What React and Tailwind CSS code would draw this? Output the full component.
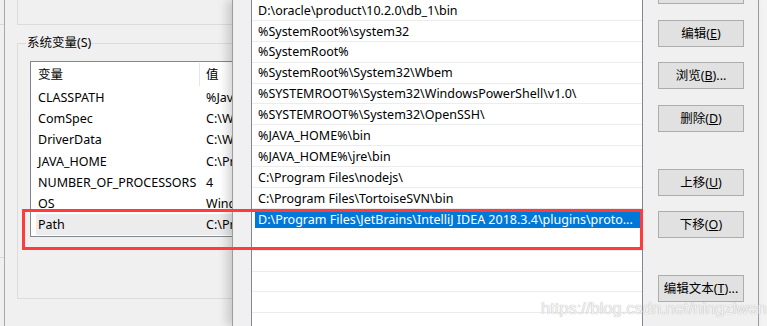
import React from 'react';

const sysVars = [
  ['CLASSPATH', '%Java_Home%\\lib\\dt.jar;%Java_Home%\\lib\\tools.jar'],
  ['ComSpec', 'C:\\WINDOWS\\system32\\cmd.exe'],
  ['DriverData', 'C:\\Windows\\System32\\Drivers\\DriverData'],
  ['JAVA_HOME', 'C:\\Program Files\\Java\\jdk1.8.0_201'],
  ['NUMBER_OF_PROCESSORS', '4'],
  ['OS', 'Windows_NT'],
  ['Path', 'C:\\Program Files (x86)\\Common Files\\Oracle\\Java\\javapath'],
];

const pathItems = [
  'D:\\oracle\\product\\10.2.0\\db_1\\bin',
  '%SystemRoot%\\system32',
  '%SystemRoot%',
  '%SystemRoot%\\System32\\Wbem',
  '%SYSTEMROOT%\\System32\\WindowsPowerShell\\v1.0\\',
  '%SYSTEMROOT%\\System32\\OpenSSH\\',
  '%JAVA_HOME%\\bin',
  '%JAVA_HOME%\\jre\\bin',
  'C:\\Program Files\\nodejs\\',
  'C:\\Program Files\\TortoiseSVN\\bin',
];

const font = 'font-["Noto_Sans","Noto_Sans_CJK_SC",sans-serif]';

const Btn = ({ children, className = '' }) => (
  <div
    className={`h-[27px] w-[86px] shrink-0 border border-[#adadad] bg-[#e1e1e1] flex items-center justify-center pt-[1px] text-[12.5px] text-black ${className}`}
  >
    {children}
  </div>
);

const App = () => {
  return (
    <div className={`relative w-[767px] h-[326px] overflow-hidden bg-[#f0f0f0] flex ${font} text-[12.5px] text-black leading-none`}>
      {/* Background window: environment variables */}
      <div className="w-[232px] h-full shrink-0 flex overflow-hidden">
        <div className="w-[5px] shrink-0 border-r border-[#a8a8a8]">
          <div className="h-[25px] border-b border-[#d9d9d9]" />
          <div className="h-[233px] border-b border-[#d9d9d9]" />
        </div>
        <div className="pl-[12px]">
          <div className="h-[25px] w-[420px] border-l border-b border-[#dcdcdc]" />
          <fieldset className="mt-[9px] w-[420px] h-[265px] border border-[#dcdcdc]">
            <legend className="ml-[8px] px-[1px] h-[18px] leading-[18px]">系统变量(S)</legend>
            <div className="mt-[9px] ml-[12px] w-[320px] h-[176px] border border-[#828790] bg-white">
              <div className="h-[25px] flex items-center">
                <div className="w-[169px] h-[23px] pl-[7px] pt-[1px] flex items-center border-r border-[#e5e5e5]">变量</div>
                <div className="pl-[6px] pt-[1px] whitespace-nowrap">值</div>
              </div>
              {sysVars.map(([name, value]) => (
                <div
                  key={name}
                  className={`ml-[5px] h-[21.1px] pt-[2px] flex items-center whitespace-nowrap ${name === 'Path' ? 'bg-[#ececec]' : ''}`}
                >
                  <span className="w-[164px] shrink-0 pl-[2px]">{name}</span>
                  <span className="pl-[6px]">{value}</span>
                </div>
              ))}
            </div>
          </fieldset>
        </div>
      </div>

      {/* Edit environment variable dialog */}
      <div className="relative w-[527px] h-full shrink-0 flex border-l border-r border-[#9c9c9c] bg-[#f0f0f0] shadow-[-5px_0_9px_rgba(0,0,0,0.16)]">
        <div className="ml-[18px] w-[392px] h-[340px] -mt-[1px] border border-[#828790] bg-white shrink-0">
          {pathItems.map((p) => (
            <div key={p} className="h-[20.9px] border-b border-[#ececec] pl-[6px] pt-[2px] flex items-center whitespace-nowrap">
              {p}
            </div>
          ))}
          <div className="h-[20.9px] pt-[2px] pl-[3px] pr-[1px]">
            <div className="h-[17.5px] bg-[#0078d7] text-white pl-[3px] pt-[1px] flex items-center whitespace-nowrap overflow-hidden">
              D:\Program Files\JetBrains\IntelliJ IDEA 2018.3.4\plugins\proto...
            </div>
          </div>
          {[0, 1, 2, 3, 4].map((i) => (
            <div key={i} className="h-[20.9px] border-b border-[#ececec]" />
          ))}
        </div>
        <div className="ml-[15px] -mt-[23px] flex flex-col">
          <Btn>新建(<u>N</u>)</Btn>
          <Btn className="mt-[16px]">编辑(<u>E</u>)</Btn>
          <Btn className="mt-[15px]">浏览(<u>B</u>)...</Btn>
          <Btn className="mt-[16px]">删除(<u>D</u>)</Btn>
          <Btn className="mt-[37px]">上移(<u>U</u>)</Btn>
          <Btn className="mt-[15px]">下移(<u>O</u>)</Btn>
          <Btn className="mt-[37px]">编辑文本(<u>T</u>)...</Btn>
        </div>
      </div>

      <div className="flex-1 bg-[#f3f3f3]" />

      {/* Annotation */}
      <div className="absolute left-[22px] top-[209px] w-[621px] h-[41px] border-[3px] border-[#ff3b3b]" />

      {/* Watermark */}
      <div className='absolute left-[541px] top-[300px] font-["Liberation_Sans",sans-serif] text-[16.5px] leading-none text-[#f4f4f4] [text-shadow:0_0_1px_#9a9a9a]'>
        https://blog.csdn.net/ningziwen
      </div>
    </div>
  );
};

export default App;
